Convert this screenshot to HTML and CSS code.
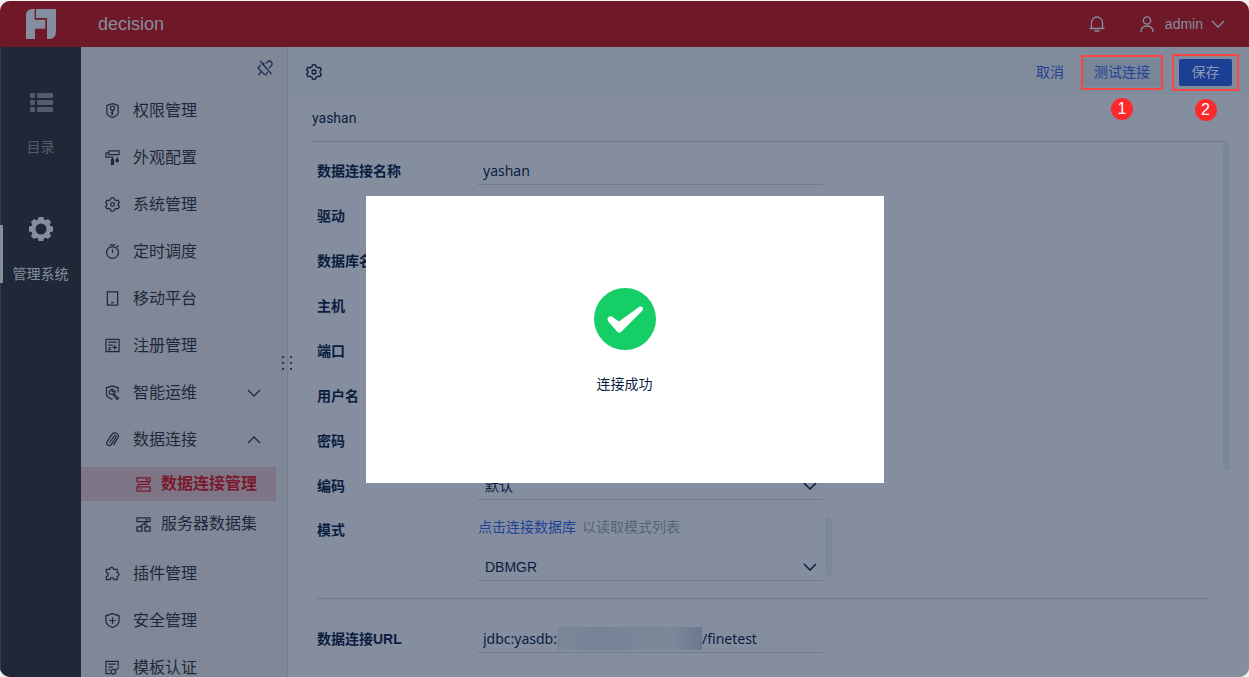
FILE: index.html
```html
<!DOCTYPE html>
<html lang="zh-CN">
<head>
  <meta charset="UTF-8">
  <meta name="viewport" content="width=device-width, initial-scale=1.0">
  <title>decision</title>
  <link rel="stylesheet" href="styles.css">
</head>
<body>
  <div class="app">
    <header class="header">
      <svg class="logo" viewBox="0 0 90 90"><path d="M0 90V20Q0 0 20 0H26V32H58V59H27V90z"/><path d="M30 0H90V68Q90 90 68 90H63V27H30z"/></svg>
      <span class="brand">decision</span>
      <button class="header-btn bell" aria-label="消息">
        <svg class="icon" viewBox="0 0 16 16"><path d="M.5 12.5h15M2.5 12.5V6.500a5.500 5.500 0 0 1 11 0v6M5.500 15h5"/></svg>
      </button>
      <button class="header-btn user">
        <svg class="icon" viewBox="0 0 16 16"><circle cx="8" cy="4.500" r="3.700"/><path d="M2 16c0-4 2.500-6 6-6s6 2 6 6"/></svg>
        <span>admin</span>
        <svg class="chevron" viewBox="0 0 14 8"><path d="M1 1l6 6 6-6"/></svg>
      </button>
    </header>

    <div class="body">
      <nav class="rail">
        <a class="rail-item" href="#">
          <svg class="rail-icon" viewBox="0 0 24 24"><rect x="1" y="3" width="5" height="5" rx="1"/><rect x="8" y="3" width="16" height="5" rx="1"/><rect x="1" y="10" width="5" height="5" rx="1"/><rect x="8" y="10" width="16" height="5" rx="1"/><rect x="1" y="17" width="5" height="5" rx="1"/><rect x="8" y="17" width="16" height="5" rx="1"/></svg>
          <span>目录</span>
        </a>
        <a class="rail-item active" href="#">
          <svg class="rail-icon" viewBox="0 0 24 24"><path fill-rule="evenodd" d="M9.600 0h4.800l.7 2.700 1.500.6L19 1.900 22.100 5l-1.400 2.400.6 1.500 2.700.7v4.800l-2.700.7-.6 1.500 1.400 2.400-3.100 3.100-2.400-1.400-1.500.6-.7 2.700H9.600l-.7-2.700-1.500-.6L5 22.100 1.900 19l1.400-2.400-.6-1.500L0 14.400V9.600l2.700-.7.6-1.500L1.900 5 5 1.900l2.400 1.400 1.500-.6zM12 6.500a5.500 5.500 0 1 0 0 11 5.500 5.500 0 0 0 0-11z"/></svg>
          <span>管理系统</span>
        </a>
      </nav>

      <aside class="sidebar">
        <div class="sidebar-head">
          <button class="pin" aria-label="取消固定">
            <svg class="icon" viewBox="0 0 16 16"><path d="M3 1l11.500 13M6 3l1.500 1.500M9 3.500L11.500 1h2L15 3v2l-3 3M4 5L1 7.500l1.500 2L7 14l2 1 1.500-3M4.500 11.500L1.500 15"/></svg>
          </button>
        </div>
        <a class="menu-item" href="#">
          <svg class="icon" viewBox="0 0 16 16"><path d="M8 .7l6 2v8c0 2.200-2.500 3.700-6 4.700-3.500-1-6-2.500-6-4.700v-8z"/><circle cx="8" cy="5.500" r="2.200"/><path d="M8 7.700v5M8 10H6M8 12H6"/></svg>
          <span>权限管理</span>
        </a>
        <a class="menu-item" href="#">
          <svg class="icon" viewBox="0 0 16 16"><path d="M4 1h11v4H4zM4 3H1v4.500h7V10"/><path class="solid" d="M6.300 9.500h3.400V16H6.300zM13 7.500l1.700 3a1.900 1.900 0 1 1-3.400 0z"/></svg>
          <span>外观配置</span>
        </a>
        <a class="menu-item" href="#">
          <svg class="icon" viewBox="0 0 16 16"><path d="M6.500.8h3l.6 2 1.700 1 2.100-.5 1.500 2.500L14 7.200v1.600l1.400 1.400-1.500 2.500-2.100-.5-1.700 1-.6 2h-3l-.6-2-1.700-1-2.100.5-1.500-2.500L2 8.800V7.200L.6 5.800l1.500-2.500 2.100.5 1.700-1z"/><circle cx="8" cy="8" r="2"/></svg>
          <span>系统管理</span>
        </a>
        <a class="menu-item" href="#">
          <svg class="icon" viewBox="0 0 16 16"><circle cx="8" cy="9" r="6.300"/><path d="M5 1h6M8 5.500V9.500M12.500 3.500L14.500 1.500"/></svg>
          <span>定时调度</span>
        </a>
        <a class="menu-item" href="#">
          <svg class="icon" viewBox="0 0 16 16"><path d="M2.500 1h11v14h-11zM6.500 12.500h3"/></svg>
          <span>移动平台</span>
        </a>
        <a class="menu-item" href="#">
          <svg class="icon" viewBox="0 0 16 16"><path d="M1 1.500h14v13H1zM3.500 4.500h9M3.500 7.500h5M3.500 10.500h3M3.500 12.500h3M10.500 7.500v5M8 10h5"/></svg>
          <span>注册管理</span>
        </a>
        <a class="menu-item" href="#">
          <svg class="icon" viewBox="0 0 16 16"><path d="M8 15.300C4 14 1.500 12 1.500 9V3L8 1l6 2v5"/><path d="M8.500 4.500L7.500 6.500l1.500 1 1.500-1.500c1 1.500 0 3-1 3.500l5 4.500-1.500 1.500-5-5.500C4.500 10.500 4 8 5 6.500s2-2 3.500-2z"/></svg>
          <span>智能运维</span>
          <svg class="chevron" viewBox="0 0 14 8"><path d="M1 1l6 6 6-6"/></svg>
        </a>
        <a class="menu-item" href="#">
          <svg class="icon" viewBox="0 0 16 16"><path d="M5 11.500L9.500 4.500c1-1.500 3-.5 2 1.200L7 13c-1.800 3-6.500 1-4.800-2.500L7 3c2.500-4 9-1.500 6.800 3L9 14"/></svg>
          <span>数据连接</span>
          <svg class="chevron" viewBox="0 0 14 8"><path d="M1 7l6-6 6 6"/></svg>
        </a>
        <div class="submenu">
          <a class="submenu-item active" href="#">
            <svg class="icon" viewBox="0 0 16 16"><path d="M1 1h14v4H1zM1 10.500h14V15H1zM10 3h3M3 12.800h3M13.500 5v2.800h-11v2.700"/></svg>
            <span>数据连接管理</span>
          </a>
          <a class="submenu-item" href="#">
            <svg class="icon" viewBox="0 0 16 16"><path d="M1 1h14v4H1zM1 10.500h5.500V15H1zM9.500 10.500H15V15H9.500zM10 3h3M12 5L3.500 10.500M7 8h4l1.500 2.500"/></svg>
            <span>服务器数据集</span>
          </a>
        </div>
        <a class="menu-item" href="#">
          <svg class="icon" viewBox="0 0 16 16"><path d="M1.500 3.500H5a2 2 0 1 1 4 0h4v3.500a2 2 0 1 1 0 4V14.500H9.500a2 2 0 0 0-4 0h-4V11a2 2 0 0 0 0-4z"/></svg>
          <span>插件管理</span>
        </a>
        <a class="menu-item" href="#">
          <svg class="icon" viewBox="0 0 16 16"><path d="M8 .7l7 2.300v5c0 3.500-3 6-7 7.500C4 14 1 11.500 1 8V3zM8 4.500v7M4.500 8h7"/></svg>
          <span>安全管理</span>
        </a>
        <a class="menu-item" href="#">
          <svg class="icon" viewBox="0 0 16 16"><path d="M6 14.500H1v-13h13V7M3.500 4.500h8M3.500 7.500h5M3.500 10.500h2"/><circle cx="9" cy="12.500" r="2.500"/><path d="M11 10.800L15 8"/></svg>
          <span>模板认证</span>
        </a>
        <div class="drag-handle"><i></i><i></i><i></i><i></i><i></i><i></i></div>
      </aside>

      <main class="main">
        <div class="toolbar">
          <svg class="icon toolbar-icon" viewBox="0 0 16 16"><path d="M6.500.8h3l.6 2 1.700 1 2.100-.5 1.500 2.500L14 7.200v1.600l1.400 1.400-1.500 2.500-2.100-.5-1.700 1-.6 2h-3l-.6-2-1.700-1-2.100.5-1.500-2.500L2 8.800V7.200L.6 5.800l1.500-2.500 2.100.5 1.700-1z"/><circle cx="8" cy="8" r="2"/></svg>
          <button class="btn btn-text">取消</button>
          <div class="step step-test">
            <button class="btn btn-light">测试连接</button>
            <span class="badge">1</span>
          </div>
          <div class="step step-save">
            <button class="btn btn-primary">保存</button>
            <span class="badge">2</span>
          </div>
        </div>

        <div class="content">
          <h1 class="title">yashan</h1>
          <form class="form">
            <div class="row">
              <label for="name">数据连接名称</label>
              <input class="field" id="name" type="text" value="yashan">
            </div>
            <div class="row">
              <label for="driver">驱动</label>
              <input class="field" id="driver" type="text">
            </div>
            <div class="row">
              <label for="database">数据库名称</label>
              <input class="field" id="database" type="text">
            </div>
            <div class="row">
              <label for="host">主机</label>
              <input class="field" id="host" type="text">
            </div>
            <div class="row">
              <label for="port">端口</label>
              <input class="field" id="port" type="text">
            </div>
            <div class="row">
              <label for="username">用户名</label>
              <input class="field" id="username" type="text">
            </div>
            <div class="row">
              <label for="password">密码</label>
              <input class="field" id="password" type="password">
            </div>
            <div class="row">
              <label for="charset">编码</label>
              <div class="select-wrap">
                <select class="field" id="charset"><option>默认</option></select>
                <svg class="chevron" viewBox="0 0 14 8"><path d="M1 1l6 6 6-6"/></svg>
              </div>
            </div>
            <div class="row row-schema">
              <label for="schema">模式</label>
              <div class="schema">
                <p class="hint"><a href="#">点击连接数据库</a><span>以读取模式列表</span></p>
                <div class="select-wrap">
                  <select class="field" id="schema"><option>DBMGR</option></select>
                  <svg class="chevron" viewBox="0 0 14 8"><path d="M1 1l6 6 6-6"/></svg>
                </div>
              </div>
              <div class="scrollbar schema-scrollbar"></div>
            </div>
            <hr class="divider">
            <div class="row">
              <label for="url">数据连接URL</label>
              <div class="url-field">
                <input class="url-prefix" id="url" type="text" value="jdbc:yasdb:">
                <span class="url-mask"></span>
                <input class="url-suffix" type="text" value="/finetest" aria-label="数据库">
              </div>
            </div>
          </form>
          <div class="scrollbar page-scrollbar"></div>
        </div>
      </main>
    </div>

    <div class="overlay">
      <div class="dialog" role="dialog" aria-label="连接成功">
        <svg class="success" viewBox="0 0 62 62"><circle cx="31" cy="31" r="31"/><path d="M13.500 31.500c0-3 3-4 5-2.500l6.500 4.500L45 19c3-1.500 5.500 1.500 3 4L27.500 43.500c-1.500 1.500-3 1.500-4.500 0L14.300 33.500c-.5-.6-.8-1.200-.8-2z"/></svg>
        <p>连接成功</p>
      </div>
    </div>
  </div>
</body>
</html>
```

FILE: styles.css
```css
* {
  box-sizing: border-box;
}
body {
  margin: 0;
  padding-top: 1px;
  background: #f1f1f1;
  font-family: "Liberation Sans", "Noto Sans CJK SC", sans-serif;
  font-size: 14px;
  line-height: 20px;
  color: #0a1d40;
  overflow: hidden;
}
a {
  color: inherit;
  text-decoration: none;
}
button,
input,
select {
  font: inherit;
  color: inherit;
  border: none;
  background: none;
  padding: 0;
  margin: 0;
}
button {
  cursor: pointer;
}
p {
  margin: 0;
}
.app {
  position: relative;
  display: flex;
  flex-direction: column;
  height: calc(100vh - 1px);
  border-radius: 10px;
  overflow: hidden;
  background: #858e9e;
}
.icon,
.chevron {
  flex: none;
  width: 16px;
  height: 16px;
  fill: none;
  stroke: currentColor;
  stroke-width: 1.3;
}
.icon .solid {
  fill: currentColor;
  stroke: none;
}
.chevron {
  width: 14px;
  height: 8px;
}

/* header */
.header {
  flex: none;
  display: flex;
  align-items: center;
  height: 46px;
  padding: 0 24px 0 26px;
  background: #6f1828;
  color: #858e9e;
}
.logo {
  width: 30px;
  height: 30px;
  fill: #858e9e;
}
.brand {
  flex: 1;
  margin-left: 42px;
  font-size: 18px;
}
.header-btn {
  display: flex;
  align-items: center;
}
.user {
  margin-left: 34px;
}
.user span {
  margin: 0 8px 0 10px;
}

.body {
  flex: 1;
  display: flex;
  min-height: 0;
}

/* left rail */
.rail {
  flex: none;
  width: 81px;
  background: #1f2837;
  border-left: 1px solid #333d4c;
}
.rail-item {
  position: relative;
  display: flex;
  flex-direction: column;
  align-items: center;
  gap: 23px;
  height: 127px;
  padding: 43px 1px 0 0;
  color: #525c6b;
}
.rail-item.active {
  color: #858e9e;
}
.rail-item.active::before {
  content: "";
  position: absolute;
  left: -1px;
  top: 51px;
  width: 3px;
  height: 58px;
  background: #858e9e;
}
.rail-icon {
  width: 24px;
  height: 24px;
  fill: currentColor;
}

/* menu */
.sidebar {
  position: relative;
  flex: none;
  width: 207px;
  background: #808898;
  border-right: 1px solid #747e8f;
  color: #1f2839;
  font-size: 16px;
}
.sidebar-head {
  display: flex;
  justify-content: flex-end;
  height: 40px;
  padding: 13px 14px 0 0;
}
.pin {
  height: 16px;
  color: #1d2f50;
}
.pin .icon {
  display: block;
}
.menu-item {
  display: flex;
  align-items: center;
  height: 47px;
  padding: 0 26px 0 24px;
}
.menu-item span {
  flex: 1;
  margin-left: 13px;
}
.menu-item .icon,
.submenu-item .icon {
  width: 15px;
  height: 15px;
}
.submenu {
  display: flex;
  flex-direction: column;
  gap: 6px;
  padding: 4px 11px 9px 0;
}
.submenu-item {
  display: flex;
  align-items: center;
  gap: 10px;
  height: 34px;
  padding-left: 55px;
}
.submenu-item.active {
  background: #7e7587;
  color: #791a2d;
  font-weight: bold;
}
.drag-handle {
  position: absolute;
  top: 309px;
  right: -5px;
  display: grid;
  grid-template-columns: 2px 2px;
  gap: 4px 6px;
}
.drag-handle i {
  width: 2px;
  height: 2px;
  background: #2b3750;
}

/* main */
.main {
  flex: 1;
  min-width: 0;
  background: #858e9e;
}
.toolbar {
  display: flex;
  align-items: center;
  height: 48px;
  padding: 2px 10px 0 18px;
  background: #808b9b;
}
.toolbar-icon {
  margin-right: auto;
}
.btn {
  height: 27px;
  border-radius: 2px;
}
.btn-text {
  margin-right: 17px;
  color: #1f4296;
}
.btn-light {
  width: 78px;
  background: #798699;
  color: #1f4296;
}
.btn-primary {
  width: 53px;
  background: #1b3f92;
  color: #8c98b4;
}
.step {
  position: relative;
  display: flex;
  border: 2px solid #fd4343;
}
.step-test {
  margin-right: 9px;
  padding: 2px 0;
}
.step-save {
  padding: 3px 5px;
}
.badge {
  position: absolute;
  top: 100%;
  left: 50%;
  width: 22px;
  height: 22px;
  margin: 10px 0 0 -11px;
  border-radius: 50%;
  background: #fd292d;
  color: #fff;
  font-size: 16px;
  line-height: 22px;
  text-align: center;
}
.content {
  position: relative;
  padding: 0 23px 0 24px;
}
.title {
  margin: 0;
  padding: 13px 0;
  border-bottom: 1px solid #717b8c;
  font-family: Roboto, "Noto Sans CJK SC", sans-serif;
  font-size: 14px;
  line-height: 20px;
  font-weight: normal;
}
.form {
  display: flex;
  flex-direction: column;
  gap: 17px;
  padding: 15px 17px 0 5px;
}
.row {
  display: flex;
  align-items: center;
}
.row label {
  flex: none;
  width: 161px;
  font-weight: bold;
}
.field {
  display: block;
  width: 345px;
  height: 28px;
  padding: 0 5px;
  border-bottom: 1px solid #717b8c;
  border-radius: 0;
  outline: none;
  font-family: "Noto Sans", "Noto Sans CJK SC", sans-serif;
}
select.field {
  padding: 0 7px;
  appearance: none;
  font-family: inherit;
}
.select-wrap {
  position: relative;
}
.select-wrap .chevron {
  position: absolute;
  right: 6px;
  top: 10px;
  pointer-events: none;
  stroke-width: 1.5;
}
.row-schema {
  align-items: flex-start;
}
.row-schema label {
  padding-top: 3px;
}
.schema {
  display: flex;
  flex-direction: column;
  gap: 16px;
}
.hint {
  color: #566477;
}
.hint a {
  margin-right: 6px;
  color: #1f4296;
}
.scrollbar {
  width: 7px;
  border-radius: 4px;
  background: #7b8799;
}
.schema-scrollbar {
  height: 60px;
  margin-left: 2px;
}
.page-scrollbar {
  position: absolute;
  top: 48px;
  right: 19px;
  height: 327px;
}
.divider {
  width: 100%;
  margin: 0 0 9px;
  border: none;
  border-top: 1px solid #717b8c;
}
.url-field {
  display: flex;
  align-items: center;
  width: 345px;
  height: 28px;
  border-bottom: 1px solid #717b8c;
}
.url-field input {
  height: 27px;
  outline: none;
  font-family: "Noto Sans", "Noto Sans CJK SC", sans-serif;
}
.url-prefix {
  width: 79px;
  padding-left: 5px;
}
.url-mask {
  width: 145px;
  height: 23px;
  background: linear-gradient(90deg, #7b8799, #768396 30%, #7a8799 65%, #7b8899 80%, #6a788d);
}
.url-suffix {
  flex: 1;
  min-width: 0;
}

/* result dialog */
.overlay {
  position: absolute;
  inset: 0;
  display: flex;
  align-items: center;
  justify-content: center;
  z-index: 10;
}
.dialog {
  display: flex;
  flex-direction: column;
  align-items: center;
  gap: 24px;
  width: 518px;
  padding: 92px 20px 89px;
  background: #fff;
}
.success {
  width: 62px;
  height: 62px;
  fill: #fff;
}
.success circle {
  fill: #15ce66;
}
```
